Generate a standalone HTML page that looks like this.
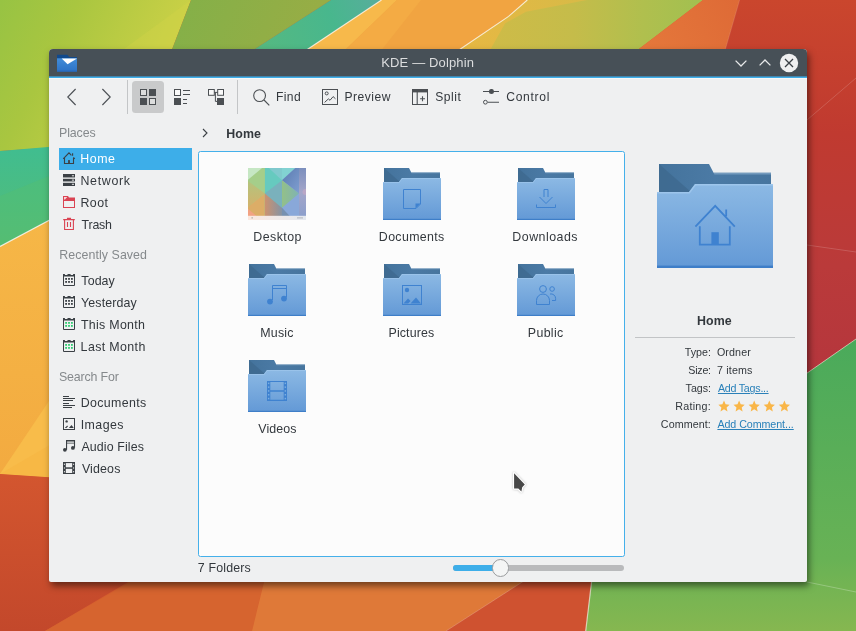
<!DOCTYPE html>
<html>
<head>
<meta charset="utf-8">
<title>KDE — Dolphin</title>
<style>
*{box-sizing:border-box;margin:0;padding:0}
html,body{width:856px;height:631px;overflow:hidden;background:#d65d2e}
body{position:relative;font-family:"Liberation Sans",sans-serif;font-size:12.4px;color:#33383d}
.abs{position:absolute}
#wall{position:absolute;left:0;top:0;width:856px;height:631px}
#win{will-change:transform;position:absolute;left:49px;top:49px;width:758px;height:533px;background:#eff0f1;border-radius:4px 4px 2px 2px;box-shadow:2px 4px 7px 0 rgba(0,0,0,.5)}
#tb{position:absolute;left:0;top:0;width:758px;height:29px;background:linear-gradient(#475057 0,#475057 27px,#4485ac 27px,#4485ac 28px,#3daee9 28px,#3daee9 29px);border-radius:4px 4px 0 0}
#tbl{position:absolute;left:0;top:29px;width:758px;height:1px;background:#f7f8f8}
.t{position:absolute;white-space:nowrap;line-height:16px;height:16px}
.tbt{font-size:12.1px;top:40px}
.hd{color:#85898c;left:10px}
.row{position:absolute;left:10px;width:133px;height:22px}
.row svg{position:absolute;left:2px;top:2px;width:16px;height:16px}
.row span{position:absolute;left:22px;top:3px;line-height:16px;white-space:nowrap}
.sel{background:#3daee9}
.sel span{color:#fff}
.lbl{position:absolute;white-space:nowrap;line-height:16px}
.il{position:absolute;font-size:10.7px;line-height:14px;white-space:nowrap}
.lnk{color:#2980b9;text-decoration:underline}
</style>
</head>
<body>
<svg id="wall" viewBox="0 0 856 631">
<defs>
<linearGradient id="gLime" gradientUnits="userSpaceOnUse" x1="0" y1="0" x2="180" y2="90"><stop offset="0" stop-color="#97c343"/><stop offset=".35" stop-color="#a9c640"/><stop offset=".85" stop-color="#c9d046"/><stop offset="1" stop-color="#ced248"/></linearGradient>
<linearGradient id="gOlive" gradientUnits="userSpaceOnUse" x1="190" y1="0" x2="300" y2="50"><stop offset="0" stop-color="#85b048"/><stop offset="1" stop-color="#97ad45"/></linearGradient>
<linearGradient id="gTealT" gradientUnits="userSpaceOnUse" x1="260" y1="50" x2="380" y2="0"><stop offset="0" stop-color="#55b981"/><stop offset=".6" stop-color="#48b78d"/><stop offset="1" stop-color="#58ad9c"/></linearGradient>
<linearGradient id="gTealL" x1="0" y1="0" x2="0" y2="1"><stop offset="0" stop-color="#40bd90"/><stop offset="1" stop-color="#56bc74"/></linearGradient>
<linearGradient id="gOrL" x1="0" y1="0" x2="0" y2="1"><stop offset="0" stop-color="#f6b747"/><stop offset=".6" stop-color="#f4b043"/><stop offset="1" stop-color="#f3aa40"/></linearGradient>
<linearGradient id="gRedL" gradientUnits="userSpaceOnUse" x1="0" y1="474" x2="0" y2="631"><stop offset="0" stop-color="#d3562f"/><stop offset="1" stop-color="#c3482b"/></linearGradient>
<linearGradient id="gRedR" gradientUnits="userSpaceOnUse" x1="0" y1="0" x2="0" y2="380"><stop offset="0" stop-color="#ca462d"/><stop offset=".35" stop-color="#c03a30"/><stop offset=".7" stop-color="#ba3a3a"/><stop offset="1" stop-color="#b5363d"/></linearGradient>
<linearGradient id="gGreenR" gradientUnits="userSpaceOnUse" x1="0" y1="340" x2="0" y2="631"><stop offset="0" stop-color="#4aaa5b"/><stop offset=".75" stop-color="#68b255"/><stop offset="1" stop-color="#86b750"/></linearGradient>
<linearGradient id="gGreenB" gradientUnits="userSpaceOnUse" x1="590" y1="0" x2="856" y2="0"><stop offset="0" stop-color="#74b54f"/><stop offset="1" stop-color="#86b750"/></linearGradient>
<linearGradient id="gYel" gradientUnits="userSpaceOnUse" x1="470" y1="0" x2="700" y2="0"><stop offset="0" stop-color="#d0bb47"/><stop offset=".45" stop-color="#c5bc4a"/><stop offset=".75" stop-color="#b0bf4e"/><stop offset="1" stop-color="#a2c050"/></linearGradient><linearGradient id="gGold" gradientUnits="userSpaceOnUse" x1="470" y1="40" x2="580" y2="0"><stop offset="0" stop-color="#e6b843"/><stop offset="1" stop-color="#d8ba47"/></linearGradient>
<linearGradient id="gOrT" gradientUnits="userSpaceOnUse" x1="640" y1="50" x2="740" y2="0"><stop offset="0" stop-color="#e5783b"/><stop offset="1" stop-color="#de6a36"/></linearGradient>
</defs>
<rect width="856" height="631" fill="#d65d2e"/>
<!-- top-left lime -->
<polygon points="0,0 191,0 171,52 60,52 60,147 0,151" fill="url(#gLime)"/>
<polygon points="191,0 171,52 120,52" fill="#d3d348" opacity=".35"/>
<!-- olive -->
<polygon points="191,0 331,0 250,52 171,52" fill="url(#gOlive)"/>
<!-- teal band top -->
<polygon points="331,0 381.5,0 303.5,52 250,52" fill="url(#gTealT)"/>
<!-- orange top -->
<polygon points="381.5,0 527.3,0 508.6,16.4 456,52 303.5,52" fill="#f1a441"/>
<polygon points="381.5,0 397,0 343,52 303.5,52" fill="#f7b94b"/>
<polygon points="397,0 421,0 380,52 343,52" fill="#f4ab44"/>
<polyline points="381.5,0 303.5,52" stroke="#fff" stroke-opacity=".75" stroke-width="1.1" fill="none"/>
<!-- yellow/olive top -->
<polygon points="527,0 703,0 635,52 456,52 508.6,16.4" fill="url(#gYel)"/>
<polygon points="527,0 587,0 526,11.7 505,23.4 489,52 456,52 508.6,16.4" fill="url(#gGold)"/>
<polyline points="527.3,0 508.6,16.4 456,52" stroke="#fff" stroke-opacity=".75" stroke-width="1.1" fill="none"/>
<!-- orange-red top -->
<polygon points="703,0 739.6,0 724.6,52 635,52" fill="url(#gOrT)"/>
<!-- red top-right -->
<polygon points="739.6,0 856,0 856,339 800,378 800,52 724.6,52" fill="url(#gRedR)"/>
<polyline points="739.6,0 724.6,52" stroke="#fff" stroke-opacity=".12" stroke-width="1" fill="none"/>
<polyline points="800,126 856,78" stroke="#fff" stroke-opacity=".16" stroke-width="1" fill="none"/>
<polyline points="800,244 856,252" stroke="#fff" stroke-opacity=".16" stroke-width="1" fill="none"/>
<!-- left teal -->
<polygon points="0,151 60,146 60,214.5 0,246.5" fill="url(#gTealL)"/>
<polygon points="0,196 60,171.5 60,214.5 0,246.5" fill="#55be70" opacity=".45"/>
<!-- left orange -->
<polygon points="0,246.5 60,214.5 60,478 0,474" fill="url(#gOrL)"/>
<polygon points="0,474 49,401 60,388 60,478" fill="#f8bc4a"/>
<polygon points="0,474 60,439 60,478" fill="#f7b845"/>
<polyline points="0,246.5 60,214.5" stroke="#fff" stroke-opacity=".8" stroke-width="1.2" fill="none"/>
<!-- left red -->
<polygon points="0,474 60,478 140,575 45,631 0,631" fill="url(#gRedL)"/>
<!-- bottom -->
<polygon points="45,631 130,582 140,570 267,570 252,631" fill="#d6642f"/>
<polygon points="252,631 267,570 541,570 446,631" fill="#df7938"/>
<polygon points="446,631 541,570 593,570 585.7,631" fill="#cf5230"/>
<polyline points="446,631 541,570" stroke="#fff" stroke-opacity=".22" stroke-width="1" fill="none"/>
<!-- green bottom right -->
<polygon points="585.7,631 593,570 800,570 800,378 856,339 856,631" fill="url(#gGreenR)"/>
<polyline points="585.7,631 593,570" stroke="#fff" stroke-opacity=".6" stroke-width="1.2" fill="none"/>
<polyline points="800,378 856,339" stroke="#fff" stroke-opacity=".5" stroke-width="1" fill="none"/>
<polyline points="807,582 856,592" stroke="#fff" stroke-opacity=".25" stroke-width="1" fill="none"/>
</svg>
<div id="win">
<!-- title bar -->
<div id="tb"></div><div id="tbl"></div>
<div class="t" id="t_title" style="left:333.4px;top:5.5px;color:#dcddde;font-size:13px;letter-spacing:0.133px;margin-left:-1.10px;">KDE — Dolphin</div>
<svg class="abs" style="left:7px;top:5px" width="22" height="19" viewBox="0 0 22 19">
<defs><linearGradient id="ai" x1="0" y1="0" x2="0" y2="1"><stop offset="0" stop-color="#428cd8"/><stop offset="1" stop-color="#2c72c6"/></linearGradient></defs>
<path d="M1 .7H11.4L13.2 3H21V6H1Z" fill="#11498c"/>
<rect x="1" y="4.3" width="20" height="13.3" fill="url(#ai)"/>
<rect x="1" y="16.6" width="20" height="1" fill="#2766b8"/>
<path d="M5.7 4.5H21L11.6 10.3Z" fill="#fff"/>
</svg>
<svg class="abs" style="left:684px;top:9px" width="16" height="12" viewBox="0 0 16 12"><path d="M2.6 2.6 L8 8 L13.4 2.6" stroke="#e8e9ea" stroke-width="1.3" fill="none"/></svg>
<svg class="abs" style="left:708px;top:8px" width="16" height="12" viewBox="0 0 16 12"><path d="M2.6 8.4 L8 3 L13.4 8.4" stroke="#e8e9ea" stroke-width="1.3" fill="none"/></svg>
<svg class="abs" style="left:730px;top:4px" width="20" height="20" viewBox="0 0 20 20"><circle cx="10" cy="10" r="9.2" fill="#eff0f1"/><path d="M6 6 L14 14 M14 6 L6 14" stroke="#3a4046" stroke-width="1.3" fill="none"/></svg>
<!-- toolbar -->
<svg class="abs" style="left:15px;top:38px" width="16" height="20" viewBox="0 0 16 20"><path d="M11.6 2 L3.8 10 L11.6 18" stroke="#4d5156" stroke-width="1.15" fill="none"/></svg>
<svg class="abs" style="left:49px;top:38px" width="16" height="20" viewBox="0 0 16 20"><path d="M4.4 2 L12.2 10 L4.4 18" stroke="#4d5156" stroke-width="1.15" fill="none"/></svg>
<div class="abs" style="left:78px;top:31px;width:1px;height:34px;background:#c3c5c7"></div>
<div class="abs" style="left:83px;top:32px;width:32px;height:32px;background:#c9cacb;border-radius:3.5px"></div>
<svg class="abs" style="left:91px;top:40px" width="16" height="16" viewBox="0 0 16 16"><g fill="#4b4f53"><rect x="9" y="0" width="7" height="7"/><rect x="0" y="9" width="7" height="7"/></g><g fill="#dcdddd" stroke="#4b4f53" stroke-width="1"><rect x=".5" y=".5" width="6" height="6"/><rect x="9.5" y="9.5" width="6" height="6"/></g></svg>
<svg class="abs" style="left:125px;top:40px" width="16" height="16" viewBox="0 0 16 16"><rect x="0" y="9" width="7" height="7" fill="#4b4f53"/><rect x=".5" y=".5" width="6" height="6" fill="#fafafa" stroke="#4b4f53"/><path d="M9 1.5H16M9 5.5H16M9 10.5H13M9 14.5H13" stroke="#4b4f53" stroke-width="1"/></svg>
<svg class="abs" style="left:159px;top:40px" width="16" height="16" viewBox="0 0 16 16"><rect x="9" y="9" width="7" height="7" fill="#4b4f53"/><rect x=".5" y=".5" width="5.8" height="5.8" fill="#fafafa" stroke="#4b4f53"/><rect x="9.7" y=".5" width="5.8" height="5.8" fill="#fafafa" stroke="#4b4f53"/><path d="M6.3 3.4H9.7M7.4 3.4V12.4H9" stroke="#4b4f53" stroke-width="1" fill="none"/></svg>
<div class="abs" style="left:188px;top:31px;width:1px;height:34px;background:#c3c5c7"></div>
<svg class="abs" style="left:204px;top:40px" width="17" height="17" viewBox="0 0 17 17"><circle cx="6.6" cy="6.6" r="5.9" fill="none" stroke="#4b4f53" stroke-width="1.1"/><path d="M11 11L16.3 16.3" stroke="#4b4f53" stroke-width="1.1"/></svg>
<svg class="abs" style="left:273px;top:40px" width="16" height="16" viewBox="0 0 16 16"><rect x=".5" y=".5" width="15" height="15" fill="none" stroke="#4b4f53"/><circle cx="4.7" cy="4.4" r="1.5" fill="none" stroke="#4b4f53"/><path d="M2.6 13.4L6.4 9.9L8 11.3L11.1 7.6L13.5 9.8" fill="none" stroke="#4b4f53"/></svg>
<svg class="abs" style="left:363px;top:40px" width="16" height="16" viewBox="0 0 16 16"><rect x=".5" y=".5" width="15" height="15" fill="none" stroke="#4b4f53"/><rect x="0" y="0" width="16" height="3.4" fill="#4b4f53"/><path d="M5.2 3V16M8.1 9.7H13M10.5 7.3V12.2" stroke="#4b4f53" stroke-width="1.1" fill="none"/></svg>
<svg class="abs" style="left:434px;top:40px" width="16" height="16" viewBox="0 0 16 16"><path d="M0 2.45H16M4.6 13.25H16" stroke="#4b4f53" stroke-width="1.1"/><circle cx="8.45" cy="2.45" r="2.5" fill="#4b4f53"/><circle cx="2.4" cy="13.2" r="1.9" fill="#eff0f1" stroke="#4b4f53"/></svg>
<div class="t tbt" id="t_Find" style="left:226.60000000000002px;letter-spacing:0.400px;margin-left:0.40px;">Find</div>
<div class="t tbt" id="t_Preview" style="left:295.2px;letter-spacing:0.500px;margin-left:0.25px;">Preview</div>
<div class="t tbt" id="t_Split" style="left:385.9px;letter-spacing:0.550px;margin-left:0.25px;">Split</div>
<div class="t tbt" id="t_Control" style="left:456.8px;letter-spacing:0.700px;margin-left:0.45px;">Control</div>
<!-- sidebar -->
<div class="t hd" id="t_h_Places" style="top:76px;letter-spacing:-0.120px;margin-left:0.05px;">Places</div>
<div class="row sel" style="top:99px"><svg viewBox="0 0 16 16"><path d="M2.2 8.8L8 2.9L10.4 5.3M12.4 7.4L13.8 8.8M3.5 8V13.5H12.5V8M11.6 3.2V5.7" fill="none" stroke="#3b4045" stroke-width="1.1"/><rect x="7.1" y="10.1" width="1.8" height="3.5" fill="#3b4045"/></svg><span id="t_s_Home" style="letter-spacing:0.533px;margin-left:-0.65px;">Home</span></div>
<div class="row" style="top:121px"><svg viewBox="0 0 16 16"><rect x="2" y="2" width="12" height="12" fill="#3b4045"/><path d="M2 6.05H14M2 10.1H14" stroke="#fdfdfd" stroke-width="1.15"/><path d="M10.9 3.8H13M10.9 8.1H13M10.9 12.3H13" stroke="#fdfdfd" stroke-width=".9"/></svg><span id="t_s_Network" style="letter-spacing:0.700px;margin-left:-0.60px;">Network</span></div>
<div class="row" style="top:143px"><svg viewBox="0 0 16 16"><path d="M2 2H7L8 3.6H14V14H2Z" fill="#da4453"/><path d="M3 7H13V13H3Z" fill="#eff0f1"/><path d="M3 3H6.3L4 5.6H3Z" fill="#f6d5d9"/></svg><span id="t_s_Root" style="letter-spacing:0.467px;margin-left:-0.55px;">Root</span></div>
<div class="row" style="top:165px"><svg viewBox="0 0 16 16"><path d="M2.2 3.6H13.8M6.5 3.4V2.4H9.5V3.4M3.6 3.6V13.5H12.4V3.6M6.5 6V11M9.5 6V11" fill="none" stroke="#da4453" stroke-width="1.1"/></svg><span id="t_s_Trash" style="letter-spacing:-0.200px;margin-left:0.55px;">Trash</span></div>
<div class="t hd" id="t_h_RecentlySaved" style="top:198px;letter-spacing:0.062px;margin-left:0.35px;">Recently Saved</div>
<div class="row" style="top:221px"><svg viewBox="0 0 16 16"><path d="M2.5 3.5H13.5V13.5H2.5Z" fill="none" stroke="#3b4045" stroke-width="1"/><path d="M2 2.1H3.9V3.3H6.5V2.1H9.6V3.3H12.1V2.1H14V4.5H2Z" fill="#3b4045"/><rect x="4.2" y="6" width="1.8" height="1.8" fill="#3b4045"/><rect x="7.1" y="6" width="1.8" height="1.8" fill="#3b4045"/><rect x="10" y="6" width="1.8" height="1.8" fill="#3b4045"/><rect x="4.2" y="9" width="1.8" height="1.8" fill="#3b4045"/><rect x="7.1" y="9" width="1.8" height="1.8" fill="#3b4045"/><rect x="10" y="9" width="1.8" height="1.8" fill="#3b4045"/></svg><span id="t_s_Today" style="letter-spacing:0.100px;margin-left:0.35px;">Today</span></div>
<div class="row" style="top:243px"><svg viewBox="0 0 16 16"><path d="M2.5 3.5H13.5V13.5H2.5Z" fill="none" stroke="#3b4045" stroke-width="1"/><path d="M2 2.1H3.9V3.3H6.5V2.1H9.6V3.3H12.1V2.1H14V4.5H2Z" fill="#3b4045"/><rect x="4.2" y="6" width="1.8" height="1.8" fill="#3b4045"/><rect x="7.1" y="6" width="1.8" height="1.8" fill="#3b4045"/><rect x="10" y="6" width="1.8" height="1.8" fill="#3b4045"/><rect x="4.2" y="9" width="1.8" height="1.8" fill="#3b4045"/><rect x="7.1" y="9" width="1.8" height="1.8" fill="#3b4045"/><rect x="10" y="9" width="1.8" height="1.8" fill="#3b4045"/></svg><span id="t_s_Yesterday" style="letter-spacing:0.125px;margin-left:0.05px;">Yesterday</span></div>
<div class="row" style="top:265px"><svg viewBox="0 0 16 16"><path d="M2.5 3.5H13.5V13.5H2.5Z" fill="none" stroke="#3b4045" stroke-width="1"/><path d="M2 2.1H3.9V3.3H6.5V2.1H9.6V3.3H12.1V2.1H14V4.5H2Z" fill="#3b4045"/><rect x="4.2" y="6" width="1.8" height="1.8" fill="#2ecc71"/><rect x="7.1" y="6" width="1.8" height="1.8" fill="#2ecc71"/><rect x="10" y="6" width="1.8" height="1.8" fill="#2ecc71"/><rect x="4.2" y="9" width="1.8" height="1.8" fill="#2ecc71"/><rect x="7.1" y="9" width="1.8" height="1.8" fill="#2ecc71"/><rect x="10" y="9" width="1.8" height="1.8" fill="#2ecc71"/></svg><span id="t_s_ThisMonth" style="letter-spacing:0.289px;">This Month</span></div>
<div class="row" style="top:287px"><svg viewBox="0 0 16 16"><path d="M2.5 3.5H13.5V13.5H2.5Z" fill="none" stroke="#3b4045" stroke-width="1"/><path d="M2 2.1H3.9V3.3H6.5V2.1H9.6V3.3H12.1V2.1H14V4.5H2Z" fill="#3b4045"/><rect x="4.2" y="6" width="1.8" height="1.8" fill="#2ecc71"/><rect x="7.1" y="6" width="1.8" height="1.8" fill="#2ecc71"/><rect x="10" y="6" width="1.8" height="1.8" fill="#2ecc71"/><rect x="4.2" y="9" width="1.8" height="1.8" fill="#2ecc71"/><rect x="7.1" y="9" width="1.8" height="1.8" fill="#2ecc71"/><rect x="10" y="9" width="1.8" height="1.8" fill="#2ecc71"/></svg><span id="t_s_LastMonth" style="letter-spacing:0.378px;margin-left:-0.40px;">Last Month</span></div>
<div class="t hd" id="t_h_SearchFor" style="top:320px;letter-spacing:-0.156px;margin-left:-0.05px;">Search For</div>
<div class="row" style="top:343px"><svg viewBox="0 0 16 16"><path d="M2 2.5H8M2 4.5H14M2 6.5H12M2 9.5H8M2 11.5H14M2 13.5H11" stroke="#3b4045" stroke-width="1"/></svg><span id="t_s_Documents" style="letter-spacing:0.350px;margin-left:-0.35px;">Documents</span></div>
<div class="row" style="top:365px"><svg viewBox="0 0 16 16"><rect x="2.5" y="2.5" width="11" height="11" fill="none" stroke="#3b4045"/><circle cx="5.6" cy="5.4" r="1.2" fill="#3b4045"/><path d="M3.8 12L6.2 9.6L7 10.4L5.4 12ZM7.9 12L10.5 9L12.8 12Z" fill="#3b4045"/></svg><span id="t_s_Images" style="letter-spacing:0.440px;margin-left:-0.30px;">Images</span></div>
<div class="row" style="top:387px"><svg viewBox="0 0 16 16"><path d="M5 2H14V3.6H5ZM5 4.8H14V5.6H5Z" fill="#3b4045"/><path d="M5.55 2V11.7M13.5 2V9.8" stroke="#3b4045" stroke-width="1.1"/><circle cx="3.9" cy="11.8" r="1.9" fill="#3b4045"/><circle cx="11.9" cy="9.9" r="1.9" fill="#3b4045"/></svg><span id="t_s_AudioFiles" style="letter-spacing:0.120px;margin-left:0.45px;">Audio Files</span></div>
<div class="row" style="top:409px"><svg viewBox="0 0 16 16"><rect x="2" y="2" width="12" height="12" fill="#3b4045"/><rect x="4.8" y="3.1" width="6.4" height="4.2" fill="#eff0f1"/><rect x="4.8" y="8.8" width="6.4" height="4.2" fill="#eff0f1"/><rect x="2.9" y="3.7" width="1" height="1.2" fill="#eff0f1"/><rect x="2.9" y="7.4" width="1" height="1.2" fill="#eff0f1"/><rect x="2.9" y="11.1" width="1" height="1.2" fill="#eff0f1"/><rect x="12.1" y="3.7" width="1" height="1.2" fill="#eff0f1"/><rect x="12.1" y="7.4" width="1" height="1.2" fill="#eff0f1"/><rect x="12.1" y="11.1" width="1" height="1.2" fill="#eff0f1"/></svg><span id="t_s_Videos" style="letter-spacing:0.160px;margin-left:0.90px;">Videos</span></div>
<!-- view -->
<svg width="0" height="0" style="position:absolute"><defs>
<linearGradient id="ff" x1="0" y1="0" x2="0" y2="1"><stop offset="0" stop-color="#8cb9e4"/><stop offset="1" stop-color="#6399d6"/></linearGradient>
<linearGradient id="fb" x1="0" y1="0" x2="1" y2="0"><stop offset="0" stop-color="#44739c"/><stop offset=".5" stop-color="#4b7aa5"/><stop offset="1" stop-color="#47759e"/></linearGradient>
<g id="folder">
<path d="M1 0H26L28.3 4.4H57V16H1Z" fill="url(#fb)"/>
<path d="M1 0L17 14H1Z" fill="#3d688d" opacity=".75"/>
<path d="M28.3 4.4H57V5.2H28.7Z" fill="#7fa4c4" opacity=".8"/>
<path d="M0 14H16L19 10H58V52H0Z" fill="url(#ff)"/>
<path d="M0 14H16L19 10H58V10.8H19.4L16.4 14.8H0Z" fill="#a3c9ee" opacity=".8"/>
<rect x="0" y="50.8" width="58" height="1.2" fill="#3e7ec8"/>
</g>
</defs></svg>
<div class="abs" style="left:149px;top:102px;width:427px;height:406px;background:#fcfcfc;border:1px solid #45b0ea;border-radius:2.5px"></div>
<svg class="abs" style="left:152px;top:79px" width="8" height="10" viewBox="0 0 8 10"><path d="M2 1L6 5L2 9" fill="none" stroke="#3b4045" stroke-width="1.1"/></svg>
<div class="t" id="t_bc" style="left:176.6px;top:77px;font-weight:bold;font-size:12.4px;letter-spacing:0.133px;margin-left:0.55px;">Home</div>
<svg class="abs" style="left:199px;top:119px" width="58" height="52" viewBox="0 0 58 52">
<defs>
<linearGradient id="d1" x1="0" y1="0" x2="1" y2="0"><stop offset="0" stop-color="#cc9270"/><stop offset="1" stop-color="#8593a3"/></linearGradient>
<linearGradient id="d2" x1="0" y1="0" x2="1" y2="1"><stop offset="0" stop-color="#5a7ab0"/><stop offset="1" stop-color="#7f9ed0"/></linearGradient>
<linearGradient id="d3" x1="0" y1="0" x2="1" y2="0"><stop offset="0" stop-color="#93c088"/><stop offset="1" stop-color="#7fb3b3"/></linearGradient>
<linearGradient id="d4" x1="0" y1="0" x2="0" y2="1"><stop offset="0" stop-color="#7c8fbd"/><stop offset=".5" stop-color="#a4a6c9"/><stop offset="1" stop-color="#8c9fcc"/></linearGradient>
<linearGradient id="d5" x1="0" y1="0" x2="1" y2="0"><stop offset="0" stop-color="#fbe7dd"/><stop offset=".35" stop-color="#f3e9e6"/><stop offset="1" stop-color="#e3e8ef"/></linearGradient>
<linearGradient id="d6" x1="0" y1="0" x2="0" y2="1"><stop offset="0" stop-color="#b3c47e"/><stop offset="1" stop-color="#d3b26b"/></linearGradient>
</defs>
<rect x="0" y="0" width="17" height="48" fill="#a5ce8a"/>
<path d="M0 0H14.1L0 11.7Z" fill="#c6e7c4"/>
<path d="M0 13.1L16.9 25.5L0 38.8Z" fill="url(#d6)"/>
<path d="M0 38.8L16.9 25.5V48H0Z" fill="#dcad67"/>
<path d="M0 40.7L8.4 48H0Z" fill="#f2a283"/>
<rect x="16.9" y="0" width="17.2" height="48" fill="#66cabf"/>
<path d="M20.7 0H34V12.2Z" fill="#80c9cd"/>
<path d="M16.9 25.5L34 12.2V39.8Z" fill="#7ab1bc"/>
<path d="M16.9 25.5L34 39.8V48H16.9Z" fill="url(#d1)"/>
<rect x="34" y="0" width="17" height="48" fill="#89a8d9"/>
<path d="M34 0H47.4L34 12.2Z" fill="#82d2d2"/>
<path d="M47.4 0H51V25.5L34 12.2Z" fill="url(#d2)"/>
<path d="M34 12.2L51 25.5L34 39.8Z" fill="url(#d3)"/>
<path d="M34 39.8L41.7 48H34Z" fill="#7690b0"/>
<rect x="51" y="0" width="7" height="48" fill="url(#d4)"/>
<circle cx="57.5" cy="24" r="3" fill="#c9a9c4" opacity=".6"/>
<rect y="47.8" width="58" height="4.2" fill="url(#d5)"/>
<rect x="3.4" y="49.4" width="1.6" height="1" fill="#8a8a8a" opacity=".7"/><rect x="49" y="49.4" width="6" height="1" fill="#8a8f99" opacity=".6"/>
</svg>
<div class="lbl" id="t_v_Desktop" style="left:203.8px;top:180px;letter-spacing:0.433px;margin-left:0.55px;">Desktop</div>
<svg class="abs" style="left:334px;top:119px" width="58" height="52" viewBox="0 0 58 52"><use href="#folder"/><path d="M20.5 21.5H37.5V36L33 40.5H20.5Z" fill="none" stroke="#3f82d0" stroke-width="1"/><path d="M37.5 35.5L32.5 40.5V35.5Z" fill="#3f82d0"/></svg>
<div class="lbl" id="t_v_Documents" style="left:329.7px;top:180px;letter-spacing:0.350px;margin-left:0.15px;">Documents</div>
<svg class="abs" style="left:468px;top:119px" width="58" height="52" viewBox="0 0 58 52"><use href="#folder"/><path d="M27 21.5H31V29M27 21.5V29M22.5 29L29 35.5L35.5 29M19.5 36.5V39.5H38.5V36.5" fill="none" stroke="#3f82d0" stroke-width="1"/></svg>
<div class="lbl" id="t_v_Downloads" style="left:463.7px;top:180px;letter-spacing:0.475px;margin-left:-0.35px;">Downloads</div>
<svg class="abs" style="left:199px;top:215px" width="58" height="52" viewBox="0 0 58 52"><use href="#folder"/><path d="M24.5 21.5H38.5V33.5M24.5 21.5V36M24.5 24.5H38.5" fill="none" stroke="#3f82d0" stroke-width="1"/><circle cx="22" cy="37.6" r="2.9" fill="#3f82d0"/><circle cx="36" cy="34.6" r="2.9" fill="#3f82d0"/></svg>
<div class="lbl" id="t_v_Music" style="left:211.5px;top:276px;letter-spacing:0.250px;margin-left:-0.30px;">Music</div>
<svg class="abs" style="left:334px;top:215px" width="58" height="52" viewBox="0 0 58 52"><use href="#folder"/><rect x="19.5" y="21.5" width="19" height="19" fill="none" stroke="#3f82d0"/><circle cx="24" cy="26" r="2.2" fill="#3f82d0"/><path d="M20.5 39.5L25 34.5L27.5 37L25.2 39.5ZM27.5 39.5L33 33.5L38 39.5Z" fill="#3f82d0"/></svg>
<div class="lbl" id="t_v_Pictures" style="left:338.6px;top:276px;letter-spacing:0.114px;margin-left:0.95px;">Pictures</div>
<svg class="abs" style="left:468px;top:215px" width="58" height="52" viewBox="0 0 58 52"><use href="#folder"/><circle cx="26" cy="25" r="3.4" fill="none" stroke="#3f82d0"/><path d="M19.5 40.5V36.5A6.5 6.5 0 0 1 32.5 36.5V40.5Z" fill="none" stroke="#3f82d0"/><circle cx="35.1" cy="25" r="2.3" fill="none" stroke="#3f82d0"/><path d="M33 30A4.6 4.6 0 0 1 38.6 34.5V36.5H35" fill="none" stroke="#3f82d0"/></svg>
<div class="lbl" id="t_v_Public" style="left:478.5px;top:276px;letter-spacing:0.320px;margin-left:0.35px;">Public</div>
<svg class="abs" style="left:199px;top:311px" width="58" height="52" viewBox="0 0 58 52"><use href="#folder"/><path d="M19 21H22.3V41H19ZM35.7 21H39V41H35.7ZM22 21H36V22.1H22ZM22 30.3H36V31.7H22ZM22 39.8H36V41H22Z" fill="#3f82d0"/><rect x="19.95" y="22.6" width="1.4" height="1.5" fill="#7aaee1"/><rect x="19.95" y="26.4" width="1.4" height="1.5" fill="#7aaee1"/><rect x="19.95" y="30.2" width="1.4" height="1.5" fill="#7aaee1"/><rect x="19.95" y="34.0" width="1.4" height="1.5" fill="#7aaee1"/><rect x="19.95" y="37.8" width="1.4" height="1.5" fill="#7aaee1"/><rect x="36.65" y="22.6" width="1.4" height="1.5" fill="#7aaee1"/><rect x="36.65" y="26.4" width="1.4" height="1.5" fill="#7aaee1"/><rect x="36.65" y="30.2" width="1.4" height="1.5" fill="#7aaee1"/><rect x="36.65" y="34.0" width="1.4" height="1.5" fill="#7aaee1"/><rect x="36.65" y="37.8" width="1.4" height="1.5" fill="#7aaee1"/></svg>
<div class="lbl" id="t_v_Videos" style="left:208.6px;top:372px;letter-spacing:0.120px;margin-left:0.70px;">Videos</div>
<!-- info panel -->
<svg class="abs" style="left:608px;top:115px" width="116" height="104" viewBox="0 0 58 52"><use href="#folder"/><g transform="translate(0,2.9)"><path d="M19.2 28.4L29.1 18L38.9 28.4M21.4 28.2V37.4H36.4V28.2M34.6 19.8V23.2" fill="none" stroke="#3f82d0" stroke-width=".9"/><rect x="27.2" y="31.2" width="3.7" height="6.4" fill="#3f82d0"/></g></svg>
<div class="lbl" id="t_ih" style="left:648.1px;top:264px;font-weight:bold;font-size:12.4px;letter-spacing:0.067px;margin-left:-0.10px;">Home</div>
<div class="abs" style="left:586px;top:288px;width:160px;height:1px;background:#c2c4c6"></div>
<div class="il" id="t_ik0" style="left:635.2px;top:296px;margin-left:0.65px;">Type:</div><div class="il" id="t_iv0" style="left:667.8px;top:296px;letter-spacing:0.120px;margin-left:0.15px;">Ordner</div>
<div class="il" id="t_ik1" style="left:639.2px;top:314px;letter-spacing:-0.250px;margin-left:0.15px;">Size:</div><div class="il" id="t_iv1" style="left:667.8px;top:314px;letter-spacing:0.133px;margin-left:0.30px;">7 items</div>
<div class="il" id="t_ik2" style="left:636.3px;top:332px;letter-spacing:-0.050px;margin-left:0.30px;">Tags:</div><div class="il" id="t_iv2" style="left:667.8px;top:332px;letter-spacing:-0.240px;margin-left:1.15px;"><span class="lnk">Add Tags...</span></div>
<div class="il" id="t_ik3" style="left:627.0px;top:350px;letter-spacing:0.233px;margin-left:-0.65px;">Rating:</div>
<div class="il" id="t_ik4" style="left:611.4px;top:368px;letter-spacing:0.086px;margin-left:0.45px;">Comment:</div><div class="il" id="t_iv4" style="left:667.8px;top:368px;letter-spacing:-0.062px;margin-left:0.60px;"><span class="lnk">Add Comment...</span></div>
<svg class="abs" style="left:669px;top:351px" width="76" height="13" viewBox="0 0 76 13"><path d="M6 .6L7.6 4.3L11.6 4.7L8.6 7.4L9.5 11.4L6 9.3L2.5 11.4L3.4 7.4L.4 4.7L4.4 4.3Z" transform="translate(0.0,0)" fill="#f9b648"/><path d="M6 .6L7.6 4.3L11.6 4.7L8.6 7.4L9.5 11.4L6 9.3L2.5 11.4L3.4 7.4L.4 4.7L4.4 4.3Z" transform="translate(15.1,0)" fill="#f9b648"/><path d="M6 .6L7.6 4.3L11.6 4.7L8.6 7.4L9.5 11.4L6 9.3L2.5 11.4L3.4 7.4L.4 4.7L4.4 4.3Z" transform="translate(30.2,0)" fill="#f9b648"/><path d="M6 .6L7.6 4.3L11.6 4.7L8.6 7.4L9.5 11.4L6 9.3L2.5 11.4L3.4 7.4L.4 4.7L4.4 4.3Z" transform="translate(45.3,0)" fill="#f9b648"/><path d="M6 .6L7.6 4.3L11.6 4.7L8.6 7.4L9.5 11.4L6 9.3L2.5 11.4L3.4 7.4L.4 4.7L4.4 4.3Z" transform="translate(60.4,0)" fill="#f9b648"/></svg>
<!-- status bar -->
<div class="t" id="t_st" style="left:148.5px;top:511px;letter-spacing:0.150px;margin-left:0.35px;">7 Folders</div>
<div class="abs" style="left:404px;top:516px;width:171px;height:6px;border-radius:3px;background:#b9babc"></div>
<div class="abs" style="left:404px;top:516px;width:48px;height:6px;border-radius:3px;background:#3daee9"></div>
<div class="abs" style="left:442.5px;top:510.3px;width:17.4px;height:17.4px;border-radius:50%;background:#f4f5f5;border:1px solid #9a9c9e"></div>
</div>
<svg class="abs" style="left:510px;top:469px" width="20" height="28" viewBox="0 0 20 28"><path d="M4.1 4.2L14.8 15.5L12.2 18.2L11.4 22.6L8.3 19.6H4.1Z" fill="#484848" stroke="#fff" stroke-width="2.2" stroke-linejoin="round" paint-order="stroke" style="filter:drop-shadow(0 .6px .8px rgba(0,0,0,.25))"/></svg>
</body>
</html>
